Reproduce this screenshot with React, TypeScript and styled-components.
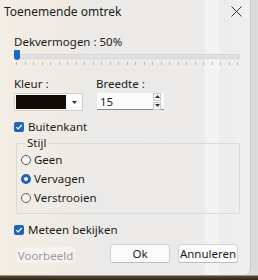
import styled, { createGlobalStyle } from 'styled-components';

const Global = createGlobalStyle`
  html, body { margin: 0; padding: 0; }
  body {
    width: 258px;
    height: 280px;
    overflow: hidden;
    background: #3a3226;
    font-family: "Noto Sans", "Open Sans", sans-serif;
    font-size: 12px;
    color: #1b1b1b;
  }
`;

const Screen = styled.div`
  width: 258px;
  height: 280px;
  display: flex;
  flex-direction: column;
  background: linear-gradient(to bottom, #dcdcdc 0, #dcdcdc 275px, #5a4a30 276px, #2d2418 280px);
`;

const Dialog = styled.div`
  width: 251px;
  height: 275px;
  box-sizing: border-box;
  border-bottom-right-radius: 7px;
  border-right: 1px solid #c9c9c9;
  background: linear-gradient(
    to right,
    #f2ede5 0,
    #efebe4 78px,
    #ebeae8 82px,
    #ecebea 204px,
    #f3f3f3 206px,
    #f3f3f3 219px,
    #ececec 220px,
    #f0f0f0 251px
  );
  display: flex;
  flex-direction: column;
`;

const TitleBar = styled.div`
  height: 23px;
  display: flex;
  align-items: center;
  justify-content: space-between;
  padding: 0 8px 0 4px;
`;

const Title = styled.span`
  font-size: 12px;
  color: #1a1a1a;
`;

const Close = styled.span`
  width: 12px;
  height: 12px;
  display: flex;
  align-items: center;
  justify-content: center;
`;

const Body = styled.div`
  display: flex;
  flex-direction: column;
  padding: 11px 0 0 14px;
`;

const Label = styled.div`
  font-size: 11.5px;
  line-height: 15px;
`;

const SliderWrap = styled.div`
  position: relative;
  width: 226px;
  height: 16px;
  margin-top: 1px;
`;

const Track = styled.div`
  position: absolute;
  left: 0;
  right: 0;
  top: 4px;
  height: 3px;
  background: #e0e0e0;
  border: 1px solid #d6d6d6;
  border-radius: 2px;
`;

const Thumb = styled.div`
  position: absolute;
  left: 0;
  top: 0;
  width: 6px;
  height: 10px;
  background: #1769c4;
  border-radius: 1px 1px 3px 3px;
`;

const Ticks = styled.div`
  position: absolute;
  left: 2px;
  right: 2px;
  top: 12px;
  height: 3px;
  display: flex;
  justify-content: space-between;
`;

const Tick = styled.span`
  width: 1px;
  height: 3px;
  background: #b9b9b9;
`;

const FieldRow = styled.div`
  display: flex;
  gap: 13px;
  margin-top: 10px;
`;

const Field = styled.div`
  display: flex;
  flex-direction: column;
  gap: 2px;
`;

const ColorBox = styled.div`
  width: 67px;
  height: 16px;
  display: flex;
  border: 1px solid #cfcfcf;
  background: #fbfbfb;
`;

const Swatch = styled.div`
  flex: 1;
  background: #120b05;
  margin: 1px;
`;

const Drop = styled.div`
  width: 15px;
  display: flex;
  align-items: center;
  justify-content: center;
`;

const Spin = styled.div`
  width: 67px;
  height: 17px;
  box-sizing: border-box;
  display: flex;
  align-items: center;
  background: #fbfbfb;
  border-bottom: 1px solid #8a8a8a;
  padding-left: 3px;
  margin-left: 1px;
`;

const SpinValue = styled.span`
  flex: 1;
  font-size: 11.5px;
`;

const SpinButtons = styled.div`
  width: 8px;
  margin-right: 3px;
  display: flex;
  flex-direction: column;
  gap: 1px;
`;

const SpinBtn = styled.div`
  height: 6px;
  border: 1px solid #c8c8c8;
  background: #f4f4f4;
  display: flex;
  align-items: center;
  justify-content: center;
`;

const CheckRow = styled.label<{ top: number }>`
  display: flex;
  align-items: center;
  gap: 4px;
  margin-top: ${p => p.top}px;
  font-size: 11.5px;
`;

const Box = styled.span`
  width: 10px;
  height: 10px;
  border-radius: 2px;
  background: #1f66b8;
  display: flex;
  align-items: center;
  justify-content: center;
`;

const Group = styled.fieldset`
  width: 224px;
  box-sizing: border-box;
  margin: 3px 0 0 2px;
  padding: 4px 0 8px 4px;
  border: 1px solid #dadada;
  border-radius: 2px;
  display: flex;
  flex-direction: column;
  gap: 5px;
`;

const Legend = styled.legend`
  padding: 0 2px;
  margin-left: 4px;
  font-size: 11.5px;
  line-height: 12px;
`;

const RadioRow = styled.label`
  display: flex;
  align-items: center;
  gap: 3px;
  font-size: 11.5px;
  line-height: 14px;
`;

const Radio = styled.span<{ on?: boolean }>`
  width: 10px;
  height: 10px;
  border-radius: 50%;
  box-sizing: border-box;
  border: ${p => (p.on ? '3px solid #1f66b8' : '1px solid #5a5a5a')};
  background: ${p => (p.on ? '#ffffff' : '#f6f6f6')};
`;

const Buttons = styled.div`
  display: flex;
  align-items: flex-end;
  margin-top: 7px;
  width: 226px;
  padding-left: 2px;
`;

const Button = styled.button<{ w: number; disabled?: boolean }>`
  width: ${p => p.w}px;
  height: ${p => (p.disabled ? 16 : 19)}px;
  margin-left: ${p => (p.disabled ? 0 : 8)}px;
  box-sizing: border-box;
  border: 1px solid ${p => (p.disabled ? '#f3f1ec' : '#d2d2d2')};
  border-bottom-color: ${p => (p.disabled ? '#f3f1ec' : '#bdbdbd')};
  border-radius: 3px;
  background: ${p => (p.disabled ? '#f6f4f0' : '#fbfbfb')};
  color: ${p => (p.disabled ? '#9b9b9b' : '#1b1b1b')};
  font-family: inherit;
  font-size: 11.5px;
  padding: 0;
`;

const Spacer = styled.div`
  width: 27px;
`;

const Check = () => (
  <svg width="8" height="8" viewBox="0 0 8 8">
    <path d="M1.3 4.2 L3.1 6 L6.8 2" fill="none" stroke="#fff" strokeWidth="1.2" />
  </svg>
);

const Arrow = ({ up }: { up?: boolean }) => (
  <svg width="5" height="3" viewBox="0 0 5 3">
    <path d={up ? 'M0 3 L2.5 0 L5 3 Z' : 'M0 0 L5 0 L2.5 3 Z'} fill="#333" />
  </svg>
);

export default function App() {
  return (
    <>
      <Global />
      <Screen>
        <Dialog>
          <TitleBar>
            <Title>Toenemende omtrek</Title>
            <Close>
              <svg width="11" height="11" viewBox="0 0 11 11">
                <path d="M0.5 0.5 L10.5 10.5 M10.5 0.5 L0.5 10.5" stroke="#333" strokeWidth="1" />
              </svg>
            </Close>
          </TitleBar>
          <Body>
            <Label>Dekvermogen : 50%</Label>
            <SliderWrap>
              <Track />
              <Thumb />
              <Ticks>
                {Array.from({ length: 27 }).map((_, i) => (
                  <Tick key={i} />
                ))}
              </Ticks>
            </SliderWrap>
            <FieldRow>
              <Field>
                <Label>Kleur :</Label>
                <ColorBox>
                  <Swatch />
                  <Drop>
                    <Arrow />
                  </Drop>
                </ColorBox>
              </Field>
              <Field>
                <Label>Breedte :</Label>
                <Spin>
                  <SpinValue>15</SpinValue>
                  <SpinButtons>
                    <SpinBtn>
                      <Arrow up />
                    </SpinBtn>
                    <SpinBtn>
                      <Arrow />
                    </SpinBtn>
                  </SpinButtons>
                </Spin>
              </Field>
            </FieldRow>
            <CheckRow top={8}>
              <Box>
                <Check />
              </Box>
              Buitenkant
            </CheckRow>
            <Group>
              <Legend>Stijl</Legend>
              <RadioRow>
                <Radio />
                Geen
              </RadioRow>
              <RadioRow>
                <Radio on />
                Vervagen
              </RadioRow>
              <RadioRow>
                <Radio />
                Verstrooien
              </RadioRow>
            </Group>
            <CheckRow top={8}>
              <Box>
                <Check />
              </Box>
              Meteen bekijken
            </CheckRow>
            <Buttons>
              <Button w={59} disabled>
                Voorbeeld
              </Button>
              <Spacer />
              <Button w={60}>Ok</Button>
              <Button w={60}>Annuleren</Button>
            </Buttons>
          </Body>
        </Dialog>
      </Screen>
    </>
  );
}
